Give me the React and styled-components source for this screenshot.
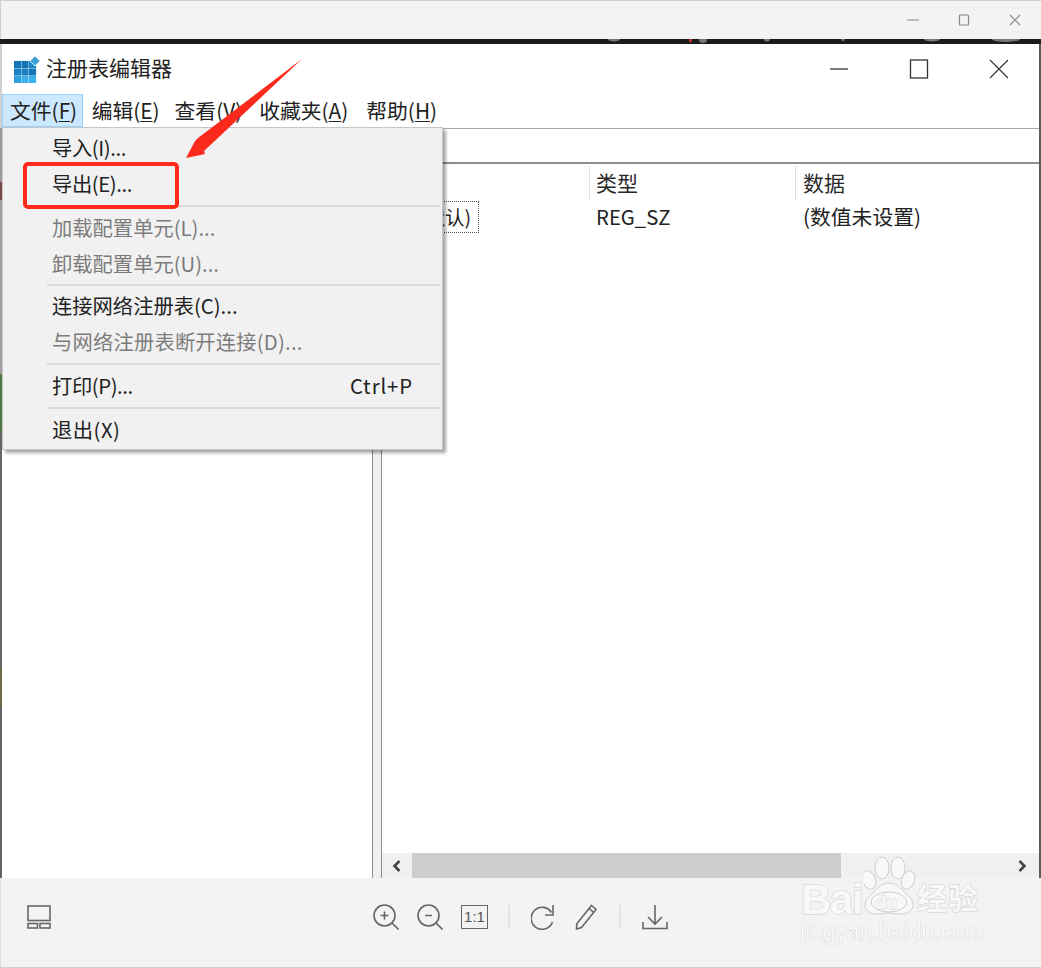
import React from 'react';
import styled, { createGlobalStyle } from 'styled-components';

const Global = createGlobalStyle`
  html, body { margin: 0; padding: 0; background: #fff; }
  #root { width: 1041px; height: 968px; overflow: hidden; }
`;

const font = `"Noto Sans CJK SC", "Noto Sans", sans-serif`;

const Page = styled.div`
  position: relative; width: 1041px; height: 968px; display: flex; flex-direction: column;
  overflow: hidden; font-family: ${font}; color: #1c1c1c; background: #f3f3f3;
`;
const ViewerTop = styled.div`
  height: 38px; flex: none; background: #f3f3f3; border-top: 1px solid #cfcfcf; border-left: 1px solid #cfcfcf;
  display: flex; justify-content: flex-end; align-items: center; padding-right: 1px;
`;
const SmallCtl = styled.button`
  width: 51px; height: 38px; padding: 0; border: 0; background: none; display: flex; align-items: center; justify-content: center;
`;
const Strip = styled.svg`
  height: 5px; width: 1041px; flex: none; display: block; background: #1c1c1c;
`;
const RegWindow = styled.div`
  height: 834px; flex: none; background: #fff; display: flex; flex-direction: column;
  border-left: 1px solid #8a8a8a; border-right: 2px solid #5a5a5a; box-sizing: border-box;
`;
const WindowEdge = styled.div`
  position: absolute; left: 0; top: 44px; width: 2px; height: 834px;
  background: linear-gradient(to bottom,
    #d0d0d0 0, #d0d0d0 84px, #9a9a9a 84px, #9a9a9a 138px, #7a4a4a 138px, #7a4a4a 156px,
    #a0a0a0 156px, #a0a0a0 330px, #4f7a45 330px, #4f7a45 387px,
    #666 387px, #666 623px, #6f6a4a 623px, #6f6a4a 663px, #5f666a 663px, #5f666a 834px);
`;
const TitleBar = styled.div`
  height: 50px; flex: none; display: flex; align-items: center; padding-left: 13px; gap: 6px;
`;
const TitleText = styled.div`
  font-size: 21px; line-height: 30px; color: #222; flex: 1; margin-bottom: 5px;
`;
const WinCtl = styled.button`
  width: 80px; height: 50px; padding: 0; border: 0; background: none; display: flex; align-items: center; justify-content: center;
`;
const WinCtls = styled.div`
  display: flex; margin-right: 0;
`;
const MenuBar = styled.div`
  height: 34px; flex: none; display: flex; align-items: stretch;
`;
const MenuItem = styled.div`
  display: flex; align-items: center; padding: 0 ${p => p.$pr ?? 7.5}px 2px ${p => p.$pl ?? 7.5}px; font-size: 20.8px; color: #222; white-space: nowrap;
  box-sizing: border-box; height: 33px; margin-left: ${p => (p.$active ? '1px' : 0)};
  border: 1px solid ${p => (p.$active ? '#99d1ff' : 'transparent')};
  background: ${p => (p.$active ? '#cce8ff' : 'transparent')};
  u { text-underline-offset: 2px; text-decoration-thickness: 1px; }
`;
const Address = styled.div`
  height: 36px; flex: none; box-sizing: border-box; border-top: 1px solid #a8a8a8; border-bottom: 2px solid #8f8f8f;
`;
const Split = styled.div`
  flex: 1; min-height: 0; display: flex;
`;
const TreePane = styled.div`
  width: 371px; flex: none; background: #fff; border-right: 1px solid #8e8e8e;
`;
const Splitter = styled.div`
  width: 8px; flex: none; background: #f0f0f0; border-right: 1px solid #8e8e8e;
`;
const ListPane = styled.div`
  flex: 1; min-width: 0; display: flex; flex-direction: column;
`;
const ListHeader = styled.div`
  height: 36px; flex: none; display: grid; grid-template-columns: 207px 206px 1fr; align-items: stretch;
`;
const HeadCell = styled.div`
  font-size: 21px; line-height: 37px; padding-left: ${p => p.$pl || 7}px; position: relative; color: #2a2a2a;
  &::before { content: ''; position: absolute; left: 0; top: 2px; bottom: 0; width: 1px; background: ${p => (p.$nosep ? 'transparent' : '#e3e3e3')}; }
`;
const Row = styled.div`
  display: grid; grid-template-columns: 207px 206px 1fr; height: 34px; align-items: center;
`;
const ValueName = styled.div`
  justify-self: end; margin-right: 110px; width: 96px; box-sizing: border-box; height: 32px; line-height: 30px; text-align: right; padding-right: 7px;
  border: 1px dotted #555; border-left: 0; font-size: 19.5px; color: #222;
`;
const Cell = styled.div`
  font-size: ${p => p.$size}px; line-height: 28px; padding-left: ${p => p.$pl || 7}px; color: #222; white-space: nowrap; margin-bottom: 2px;
`;
const Blank = styled.div`
  flex: 1;
`;
const HScroll = styled.div`
  height: 25px; flex: none; display: flex; background: #f0f0f0;
`;
const ScrollBtn = styled.div`
  width: ${p => p.$w}px; flex: none; display: flex; align-items: center; justify-content: center;
`;
const Thumb = styled.div`
  width: 429px; flex: none; background: #cdcdcd;
`;
const ViewerBottom = styled.div`
  flex: 1; background: #f3f3f3; border-bottom: 1px solid #cfcfcf; border-left: 1px solid #e0e0e0; display: flex; align-items: center;
  padding-bottom: 11px;
`;
const Thumbs = styled.div`
  width: 372px; padding-left: 26px; box-sizing: border-box; flex: none; display: flex;
`;
const Tools = styled.div`
  display: flex; align-items: center; height: 32px;
`;
const Tool = styled.div`
  width: ${p => p.$w || 26}px; height: 28px; display: flex; align-items: center; justify-content: center; margin-right: ${p => p.$mr || 0}px; flex: none;
`;
const OneToOne = styled.div`
  width: 27px; height: 24px; box-sizing: border-box; border: 1.5px solid #666; color: #555; font: 400 15px/21px "Liberation Sans", sans-serif;
  text-align: center; margin-right: 20px; flex: none;
`;
const ToolSep = styled.div`
  width: 2px; height: 24px; background: #e2e2e2; flex: none; margin-right: ${p => p.$mr}px;
`;

const Menu = styled.div`
  position: absolute; left: 2px; top: 127px; width: 441px; height: 323px; box-sizing: border-box;
  background: #f1f1f1; border: 1px solid #c6c6c6; box-shadow: 3px 3px 3px rgba(0,0,0,0.35);
  padding: 2px 2px 0 0; display: flex; flex-direction: column;
`;
const MenuEntry = styled.div`
  height: 36px; line-height: 35px; flex: none; padding: 0 27px 0 49px; display: flex; justify-content: space-between;
  font-size: 20.3px; white-space: nowrap; color: ${p => (p.$disabled ? '#7c7c7c' : '#222')};
  letter-spacing: ${p => p.$ls || 0}px;
`;
const EntryLabel = styled.span`
  letter-spacing: -0.4px;
`;
const Shortcut = styled.span`
  letter-spacing: 0.9px;
`;
const MenuRule = styled.div`
  height: 2px; flex: none; background: #dcdcdc; margin: ${p => p.$m || 3}px 0 ${p => p.$m || 3}px 44px;
`;
const Highlight = styled.div`
  position: absolute; left: 23px; top: 162px; width: 156px; height: 47px; box-sizing: border-box;
  border: 4px solid #fd2a1a; border-radius: 5px;
`;
const ArrowLayer = styled.svg`
  position: absolute; left: 180px; top: 50px; width: 130px; height: 115px;
`;
const Watermark = styled.div`
  position: absolute; left: 798px; top: 856px; width: 190px; height: 100px;
`;
const outline = `color: #f8f8f8; -webkit-text-stroke: 1px #cfcfcf; paint-order: stroke fill;`;
const WmBai = styled.div`
  position: absolute; left: 3px; top: 21px; font: 700 42px/46px "Liberation Sans", sans-serif; letter-spacing: -1.5px; ${outline}
`;
const WmDu = styled.div`
  position: absolute; left: 77px; top: 37px; font: 700 18px/20px "Liberation Sans", sans-serif; ${outline} -webkit-text-stroke-width: 0.8px;
`;
const WmCn = styled.div`
  position: absolute; left: 119px; top: 22px; font: 700 30px/36px ${font}; letter-spacing: 1px; white-space: nowrap; ${outline}
`;
const WmUrl = styled.div`
  position: absolute; left: 2px; top: 63px; font: 400 23px/26px "Liberation Sans", sans-serif; letter-spacing: -0.1px; white-space: nowrap; ${outline} -webkit-text-stroke-width: 0.7px;
`;
const WmPaw = styled.svg`
  position: absolute; left: 66px; top: 0; width: 52px; height: 60px;
`;

const stroke = { fill: 'none', stroke: '#666', strokeWidth: 1.6 };

const cells = [
  [0, 0, '#1474b4'], [7.5, 0, '#1474b4'], [15, 0, '#1c86c8'],
  [0, 7.5, '#1a80c2'], [7.5, 7.5, '#1a80c2'], [15, 7.5, '#1474b4'],
  [0, 15, '#2e9fdf'], [7.5, 15, '#3db0ea'], [15, 15, '#3db0ea'],
];

export default function App() {
  return (
    <Page>
      <Global />
      <ViewerTop>
        <SmallCtl><svg width="12" height="12" viewBox="0 0 12 12"><path d="M0 6h12" stroke="#999" strokeWidth="1.2" /></svg></SmallCtl>
        <SmallCtl><svg width="12" height="12" viewBox="0 0 12 12"><rect x="1.5" y="1" width="9" height="10" rx="1" fill="none" stroke="#888" strokeWidth="1.2" /></svg></SmallCtl>
        <SmallCtl><svg width="12" height="12" viewBox="0 0 12 12"><path d="M1 1l10 10M11 1L1 11" stroke="#888" strokeWidth="1.1" /></svg></SmallCtl>
      </ViewerTop>
      <Strip viewBox="0 0 1041 5">
        <g fill="#777">
          <ellipse cx="614" cy="0" rx="6" ry="2.5" />
          <ellipse cx="703" cy="1" rx="4" ry="3" />
          <ellipse cx="767" cy="0" rx="3" ry="2.5" />
          <ellipse cx="843" cy="0" rx="2" ry="2" />
          <ellipse cx="932" cy="0" rx="8" ry="2.5" />
          <ellipse cx="1006" cy="0" rx="14" ry="3" />
        </g>
        <rect x="689" y="0" width="3" height="3" fill="#b33" />
      </Strip>
      <RegWindow>
        <TitleBar>
          <svg width="26" height="27" viewBox="0 0 26 27">
            <rect x="0" y="4.5" width="22.5" height="22.5" fill="#cfeafa" />
            {cells.map(([x, y, c]) => (
              <rect key={`${x}-${y}`} x={x} y={y + 5} width="7" height="7" fill={c} />
            ))}
            <path d="M21 0l5 5-5 5-5-5z" fill="#3f9fd6" stroke="#d5eefa" strokeWidth="1" />
          </svg>
          <TitleText>注册表编辑器</TitleText>
          <WinCtls>
            <WinCtl><svg width="20" height="20" viewBox="0 0 20 20"><path d="M1 10h18" stroke="#333" strokeWidth="1.3" /></svg></WinCtl>
            <WinCtl><svg width="20" height="20" viewBox="0 0 20 20"><rect x="1.5" y="1" width="17" height="18" fill="none" stroke="#333" strokeWidth="1.3" /></svg></WinCtl>
            <WinCtl><svg width="20" height="20" viewBox="0 0 20 20"><path d="M1 1l18 18M19 1L1 19" stroke="#333" strokeWidth="1.1" /></svg></WinCtl>
          </WinCtls>
        </TitleBar>
        <MenuBar>
          <MenuItem $active $pl={7} $pr={5}>文件(<u>F</u>)</MenuItem>
          <MenuItem $pr={5.5}>编辑(<u>E</u>)</MenuItem>
          <MenuItem>查看(<u>V</u>)</MenuItem>
          <MenuItem $pr={8.5}>收藏夹(<u>A</u>)</MenuItem>
          <MenuItem>帮助(<u>H</u>)</MenuItem>
        </MenuBar>
        <Address />
        <Split>
          <TreePane />
          <Splitter />
          <ListPane>
            <ListHeader>
              <HeadCell $nosep />
              <HeadCell>类型</HeadCell>
              <HeadCell $pl={8}>数据</HeadCell>
            </ListHeader>
            <Row>
              <ValueName>(默认)</ValueName>
              <Cell $size={20.3}>REG_SZ</Cell>
              <Cell $size={20.8} $pl={8}>(数值未设置)</Cell>
            </Row>
            <Blank />
            <HScroll>
              <ScrollBtn $w={30}><svg width="12" height="14" viewBox="0 0 12 14"><path d="M8.5 2L3.5 7l5 5" fill="none" stroke="#444" strokeWidth="2.6" /></svg></ScrollBtn>
              <Thumb />
              <Blank />
              <ScrollBtn $w={35}><svg width="12" height="14" viewBox="0 0 12 14"><path d="M3.5 2l5 5-5 5" fill="none" stroke="#444" strokeWidth="2.6" /></svg></ScrollBtn>
            </HScroll>
          </ListPane>
        </Split>
      </RegWindow>
      <ViewerBottom>
        <Thumbs>
          <svg width="24" height="24" viewBox="0 0 24 24" {...stroke}>
            <rect x="1" y="1" width="22" height="14.5" />
            <rect x="1" y="18.5" width="9.5" height="4.5" />
            <rect x="13" y="18.5" width="10" height="4.5" />
          </svg>
        </Thumbs>
        <Tools>
          <Tool $mr={18}><svg width="26" height="26" viewBox="0 0 26 26" {...stroke}><circle cx="11.5" cy="11.5" r="10.5" /><path d="M19 19l6.5 6.5M7.5 11.5h8M11.5 7.5v8" /></svg></Tool>
          <Tool $mr={18}><svg width="26" height="26" viewBox="0 0 26 26" {...stroke}><circle cx="11.5" cy="11.5" r="10.5" /><path d="M19 19l6.5 6.5M8 11.5h7" /></svg></Tool>
          <OneToOne>1:1</OneToOne>
          <ToolSep $mr={21} />
          <Tool $mr={20} $w={24}><svg width="24" height="26" viewBox="0 0 24 26" {...stroke}><path d="M21.5 18A11 11 0 1 1 20.5 8.5M22 1v10h-8" /></svg></Tool>
          <Tool $mr={22} $w={22}><svg width="22" height="26" viewBox="0 0 22 26" {...stroke}><path d="M16.5 1.5l4.5 4L6.5 23.5l-5 1.5.3-5.2zM14 4.5l4.8 4" /></svg></Tool>
          <ToolSep $mr={21} />
          <Tool><svg width="26" height="26" viewBox="0 0 26 26" {...stroke}><path d="M13 1v19M6 13l7 7 7-7M1 18v6.5h24V18" /></svg></Tool>
        </Tools>
      </ViewerBottom>

      <WindowEdge />
      <Menu>
        <MenuEntry $ls={-0.4}>导入(I)...</MenuEntry>
        <MenuEntry $ls={-0.4}>导出(E)...</MenuEntry>
        <MenuRule />
        <MenuEntry $disabled>加载配置单元(L)...</MenuEntry>
        <MenuEntry $disabled>卸载配置单元(U)...</MenuEntry>
        <MenuRule $m={2} />
        <MenuEntry>连接网络注册表(C)...</MenuEntry>
        <MenuEntry $disabled $ls={0.2}>与网络注册表断开连接(D)...</MenuEntry>
        <MenuRule />
        <MenuEntry><EntryLabel>打印(P)...</EntryLabel><Shortcut>Ctrl+P</Shortcut></MenuEntry>
        <MenuRule />
        <MenuEntry $ls={0.5}>退出(X)</MenuEntry>
      </Menu>
      <Highlight />
      <ArrowLayer viewBox="0 0 130 115">
        <path d="M122 9L18 88l-3 3-9 17 19-4-1-3z" fill="#fb2a1c" />
      </ArrowLayer>
      <Watermark>
        <WmPaw viewBox="66 0 52 60">
          <g fill="#f8f8f8" stroke="#cfcfcf" strokeWidth="1">
            <ellipse cx="71" cy="24" rx="6.5" ry="9.5" transform="rotate(-20 71 24)" />
            <ellipse cx="84" cy="12" rx="7" ry="11" />
            <ellipse cx="100" cy="12" rx="7" ry="11" />
            <ellipse cx="110" cy="24" rx="6.5" ry="9.5" transform="rotate(20 110 24)" />
            <path d="M91 27c7 0 11 5 15 9 4 3 9 7 9 13 0 6-6 9-12 9-5 0-7-1-12-1s-7 1-12 1c-6 0-12-3-12-9 0-6 5-10 9-13 4-4 8-9 15-9z" />
            <ellipse cx="91" cy="46" rx="18" ry="10" />
          </g>
        </WmPaw>
        <WmBai>Bai</WmBai>
        <WmDu>du</WmDu>
        <WmCn>经验</WmCn>
        <WmUrl>jingyan.baidu.com</WmUrl>
      </Watermark>
    </Page>
  );
}
